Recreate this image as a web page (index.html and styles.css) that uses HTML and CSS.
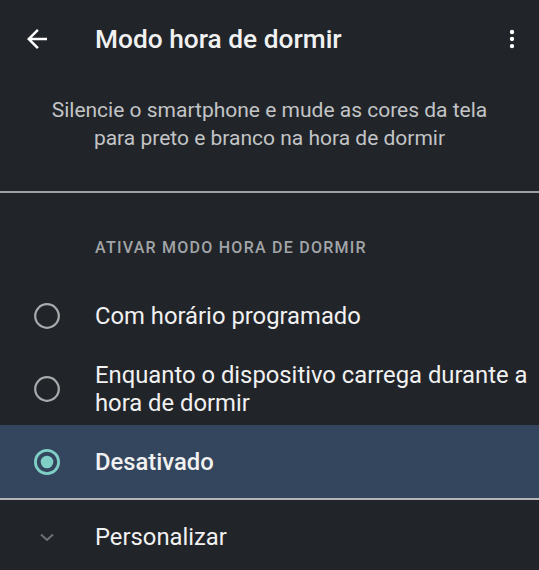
FILE: index.html
```html
<!DOCTYPE html>
<html lang="pt">
<head>
  <meta charset="UTF-8" />
  <meta name="viewport" content="width=device-width, initial-scale=1.0" />
  <title>Modo hora de dormir</title>
  <link rel="stylesheet" href="styles.css">
</head>
<body>
  <div class="toolbar">
    <svg class="back" viewBox="0 0 24 24"><path d="M20 11H7.83l5.59-5.59L12 4l-8 8 8 8 1.41-1.41L7.83 13H20v-2z"/></svg>
    <h1>Modo hora de dormir</h1>
    <svg class="more" viewBox="0 0 24 24"><circle cx="12" cy="5.5" r="2"/><circle cx="12" cy="12" r="2"/><circle cx="12" cy="18.5" r="2"/></svg>
  </div>

  <p class="desc">Silencie o smartphone e mude as cores da tela<br>para preto e branco na hora de dormir</p>

  <div class="divider thick"></div>

  <div class="section">ATIVAR MODO HORA DE DORMIR</div>

  <div class="option">
    <svg class="radio" viewBox="0 0 28 28"><circle cx="14" cy="14" r="11.8" /></svg>
    <span>Com horário programado</span>
  </div>
  <div class="option">
    <svg class="radio" viewBox="0 0 28 28"><circle cx="14" cy="14" r="11.8" /></svg>
    <span>Enquanto o dispositivo carrega durante a hora de dormir</span>
  </div>
  <div class="option selected">
    <svg class="radio" viewBox="0 0 28 28"><circle cx="14" cy="14" r="11.6" /><circle class="dot" cx="14" cy="14" r="6.3" /></svg>
    <span>Desativado</span>
  </div>

  <div class="divider"></div>

  <div class="option expand">
    <svg class="chevron" viewBox="0 0 28 28"><polyline points="8,11.5 14,17 20,11.5" /></svg>
    <span>Personalizar</span>
  </div>
</body>
</html>
```

FILE: styles.css
```css
body {
  margin: 0;
  background: #212429;
  color: #f1f1f1;
  font-family: Roboto, "Noto Sans", sans-serif;
  overflow: hidden;
}
.toolbar {
  display: flex;
  align-items: center;
  height: 78px;
  padding: 0 14px 0 22px;
}
.toolbar h1 {
  flex: 1;
  margin: 0 0 0 43px;
  font-size: 26.3px;
  font-weight: 500;
}
.back {
  width: 30px;
  height: 30px;
  fill: #fff;
}
.more {
  width: 26px;
  height: 26px;
  fill: #fff;
}
.desc {
  margin: 15px 0 0;
  height: 98px;
  padding-top: 3px;
  box-sizing: border-box;
  text-align: center;
  font-size: 21px;
  line-height: 28px;
  color: #c2c4c6;
}
.divider {
  height: 1.5px;
  background: #b4b6b8;
}
.divider.thick {
  height: 2px;
  background: #9ea0a2;
}
.section {
  display: flex;
  align-items: center;
  height: 86px;
  padding: 22px 0 0 95px;
  box-sizing: border-box;
  font-size: 16px;
  font-weight: 500;
  letter-spacing: 1.25px;
  color: #a2a5a8;
}
.option {
  display: flex;
  align-items: center;
  min-height: 73px;
  padding-left: 33px;
  font-size: 23.8px;
  line-height: 28px;
}
.option span {
  margin-left: 34px;
}
.radio {
  flex: none;
  width: 28px;
  height: 28px;
  fill: none;
  stroke: #a8aaac;
  stroke-width: 2.2;
}
.option.selected {
  background: #34455e;
  font-weight: 500;
}
.option.selected .radio {
  stroke: #7fcfc6;
  stroke-width: 2.8;
}
.radio .dot {
  fill: #7fcfc6;
  stroke: none;
}
.chevron {
  flex: none;
  width: 28px;
  height: 28px;
  fill: none;
  stroke: #6f7275;
  stroke-width: 2;
}
.option.expand {
  min-height: 75px;
}
```
